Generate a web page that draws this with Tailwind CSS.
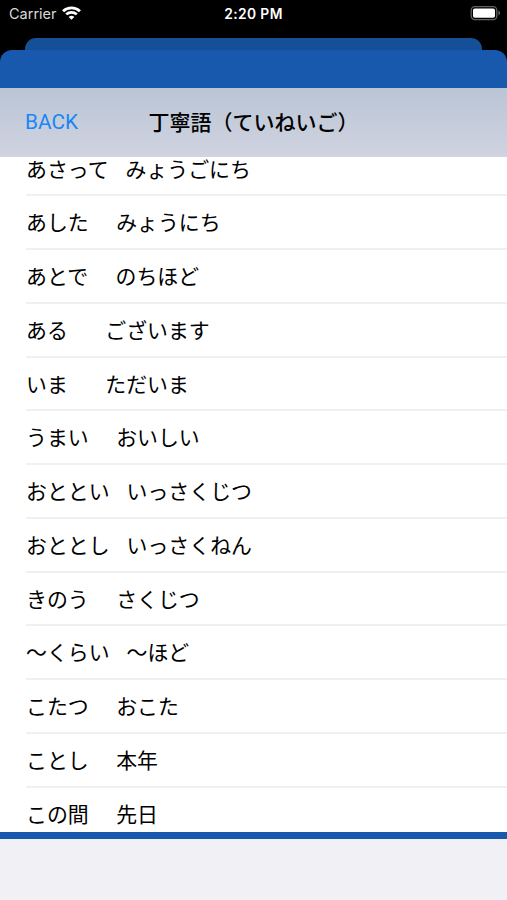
<!doctype html>
<html lang="ja">
    <head>
        <meta charset="UTF-8" />
        <meta name="viewport" content="width=device-width, initial-scale=1.0" />
        <title>丁寧語</title>
        <script src="https://cdn.jsdelivr.net/npm/@tailwindcss/browser@4"></script>
    </head>
    <body class="bg-black font-['Inter','Noto_Sans_CJK_JP',sans-serif] text-black">
        <div class="flex flex-col w-[507px] h-[900px] overflow-hidden">
            <!-- Status bar -->
            <div class="grid grid-cols-3 items-center h-[28px] mb-[10px] pl-[9px] pr-[6px] shrink-0 text-white">
                <div class="flex items-center gap-[6px]">
                    <span class="text-[14.5px] leading-[28px] text-[#d8d8d8]">Carrier</span>
                    <svg class="w-[19px] h-[14px] -ml-px -mt-[2px]" viewBox="0 0 18 14" preserveAspectRatio="none" fill="none" stroke="white" stroke-width="2.6">
                        <path d="M1 5.2a11.4 11.4 0 0 1 16 0" />
                        <path d="M4 8.4a7.1 7.1 0 0 1 10 0" />
                        <path d="M9 13.8 6.3 11.1a3.8 3.8 0 0 1 5.4 0z" fill="white" stroke="none" />
                    </svg>
                </div>
                <div class="-ml-[3px] text-center text-[13.8px] leading-[28px] font-semibold tracking-[0.4px] whitespace-nowrap">2:20 PM</div>
                <svg class="w-[31px] h-[16px] -mt-[2px] justify-self-end" viewBox="0 0 31 16">
                    <rect x="1.2" y="1.6" width="25.6" height="13" rx="3.6" fill="none" stroke="#626262" stroke-width="1.3" />
                    <rect x="3" y="3.4" width="22" height="9.4" rx="1.8" fill="white" />
                    <path d="M28.4 5.6c2.2.8 2.2 4.2 0 5z" fill="#626262" />
                </svg>
            </div>

            <!-- Stacked cards -->
            <div class="h-[12px] mx-[25px] shrink-0 rounded-t-[11px] bg-[#154f97]"></div>
            <div class="h-[38px] shrink-0 rounded-t-[12px] bg-[#1959ad]"></div>

            <!-- Navigation bar -->
            <div class="relative z-10 grid grid-cols-[1fr_auto_1fr] items-center h-[69px] shrink-0 px-[25px] bg-linear-to-b from-[#bac5d5] to-[#d0d3e0]">
                <a class="text-[20.8px] text-[#1a86f5] font-['Roboto',sans-serif]">BACK</a>
                <h1 class="text-[21px] font-medium whitespace-nowrap">丁寧語（ていねいご）</h1>
            </div>

            <!-- Word list -->
            <div class="h-[675px] shrink-0 overflow-hidden bg-white">
                <ul class="-mt-[14.5px] pl-[26px] text-[20.9px] [&>li]:flex [&>li]:items-center [&>li]:h-[53.75px] [&>li]:pt-[2px] [&>li]:border-b-2 [&>li]:border-[#f0f0f0] [&>li]:whitespace-nowrap">
                    <li class="gap-[17px]"><span>あさって</span><span>みょうごにち</span></li>
                    <li class="gap-[27.5px]"><span>あした</span><span>みょうにち</span></li>
                    <li class="gap-[27.5px]"><span>あとで</span><span>のちほど</span></li>
                    <li class="gap-[37.5px]"><span>ある</span><span>ございます</span></li>
                    <li class="gap-[37.5px]"><span>いま</span><span>ただいま</span></li>
                    <li class="gap-[27.5px]"><span>うまい</span><span>おいしい</span></li>
                    <li class="gap-[17px]"><span>おととい</span><span>いっさくじつ</span></li>
                    <li class="gap-[17px]"><span>おととし</span><span>いっさくねん</span></li>
                    <li class="gap-[27.5px]"><span>きのう</span><span>さくじつ</span></li>
                    <li class="gap-[17px]"><span>〜くらい</span><span>〜ほど</span></li>
                    <li class="gap-[27.5px]"><span>こたつ</span><span>おこた</span></li>
                    <li class="gap-[27.5px]"><span>ことし</span><span>本年</span></li>
                    <li class="gap-[27.5px]"><span>この間</span><span>先日</span></li>
                </ul>
            </div>

            <!-- Bottom area -->
            <div class="h-[7px] shrink-0 bg-[#1959ad]"></div>
            <div class="grow bg-[#f0f0f5]"></div>
        </div>
    </body>
</html>
